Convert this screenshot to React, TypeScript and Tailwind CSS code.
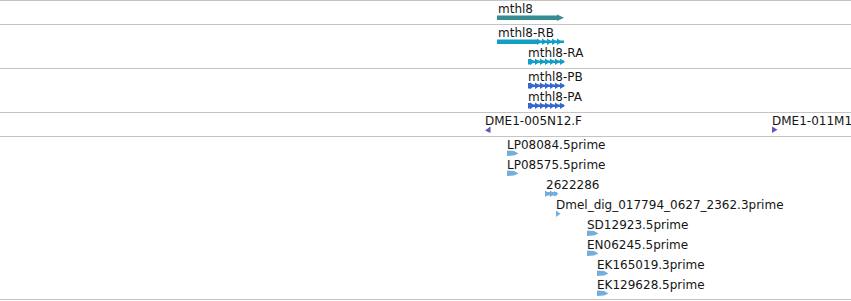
import React from 'react';

type GlyphKind = 'gene' | 'mixed' | 'chevrons' | 'left' | 'right' | 'wedge' | 'double' | 'tiny';

type Feature = {
  label: string;
  // full class names for the feature's place on the genome axis
  labelAt: string;
  glyphAt: string;
  kind: GlyphKind;
  color: string;
};

const tracks: { height: string; features: Feature[] }[] = [
  {
    height: 'h-[24px]',
    features: [{ label: 'mthl8', labelAt: 'ml-[498px]', glyphAt: 'ml-[497px]', kind: 'gene', color: '#368c90' }],
  },
  {
    height: 'h-[44px]',
    features: [
      { label: 'mthl8-RB', labelAt: 'ml-[498px]', glyphAt: 'ml-[497px]', kind: 'mixed', color: '#139fc4' },
      { label: 'mthl8-RA', labelAt: 'ml-[528px]', glyphAt: 'ml-[528px]', kind: 'chevrons', color: '#139fc4' },
    ],
  },
  {
    height: 'h-[44px]',
    features: [
      { label: 'mthl8-PB', labelAt: 'ml-[528px]', glyphAt: 'ml-[528px]', kind: 'chevrons', color: '#3568cf' },
      { label: 'mthl8-PA', labelAt: 'ml-[528px]', glyphAt: 'ml-[528px]', kind: 'chevrons', color: '#3568cf' },
    ],
  },
];

const estFeatures: Feature[] = [
  { label: 'LP08084.5prime', labelAt: 'ml-[507px]', glyphAt: 'ml-[507px]', kind: 'wedge', color: '#74aedb' },
  { label: 'LP08575.5prime', labelAt: 'ml-[507px]', glyphAt: 'ml-[507px]', kind: 'wedge', color: '#74aedb' },
  { label: '2622286', labelAt: 'ml-[546px]', glyphAt: 'ml-[545px]', kind: 'double', color: '#74aedb' },
  { label: 'Dmel_dig_017794_0627_2362.3prime', labelAt: 'ml-[556px]', glyphAt: 'ml-[556px]', kind: 'tiny', color: '#74aedb' },
  { label: 'SD12923.5prime', labelAt: 'ml-[587px]', glyphAt: 'ml-[587px]', kind: 'wedge', color: '#74aedb' },
  { label: 'EN06245.5prime', labelAt: 'ml-[587px]', glyphAt: 'ml-[587px]', kind: 'wedge', color: '#74aedb' },
  { label: 'EK165019.3prime', labelAt: 'ml-[597px]', glyphAt: 'ml-[597px]', kind: 'wedge', color: '#74aedb' },
  { label: 'EK129628.5prime', labelAt: 'ml-[597px]', glyphAt: 'ml-[597px]', kind: 'wedge', color: '#74aedb' },
];

function Chevrons({ from, to, color }: { from: number; to: number; color: string }) {
  const heads: number[] = [];
  for (let x = from; x + 4 <= to; x += 5) heads.push(x);
  return (
    <g fill={color}>
      <rect x={from} y={2.5} width={to - from} height={2.5} />
      {heads.map((x) => (
        <polygon key={x} points={`${x},0.5 ${x + 5},3.75 ${x},7`} />
      ))}
    </g>
  );
}

function Glyph({ kind, color }: { kind: GlyphKind; color: string }) {
  switch (kind) {
    case 'gene':
      return (
        <svg width={68} height={8} className="block">
          <polygon fill={color} points="0,1.5 60,1.5 60,0.5 67,3.75 60,7 60,6 0,6" />
        </svg>
      );
    case 'mixed':
      return (
        <svg width={68} height={8} className="block">
          <rect x={0} y={1.5} width={41} height={4.5} fill={color} />
          <Chevrons from={40} to={67} color={color} />
        </svg>
      );
    case 'chevrons':
      return (
        <svg width={37} height={8} className="block">
          <rect x={0} y={1} width={3} height={5.5} fill={color} />
          <Chevrons from={2} to={36} color={color} />
        </svg>
      );
    case 'left':
      return (
        <svg width={6} height={8} className="block">
          <polygon fill={color} points="5.5,0.5 0,4.5 5.5,7" />
        </svg>
      );
    case 'right':
      return (
        <svg width={6} height={8} className="block">
          <polygon fill={color} points="0,0.5 5.5,3.75 0,7" />
        </svg>
      );
    case 'wedge':
      return (
        <svg width={12} height={8} className="block">
          <polygon fill={color} points="0,0.5 7,1 11.5,3.5 7,5.5 0,6" />
        </svg>
      );
    case 'double':
      return (
        <svg width={14} height={8} className="block">
          <rect x={0} y={2} width={12} height={3.5} fill={color} />
          <polygon fill={color} points="0,0.5 5,3.75 0,7" />
          <polygon fill={color} points="5,0.5 10,3.75 5,7" />
          <polygon fill={color} points="9,1 13.5,3.75 9,6.5" />
        </svg>
      );
    case 'tiny':
      return (
        <svg width={6} height={8} className="block">
          <polygon fill={color} points="0,0.5 4.5,3.75 0,7" />
        </svg>
      );
  }
}

function FeatureRow({ f }: { f: Feature }) {
  return (
    <div className="flex h-[20px] flex-col">
      <div className={`${f.labelAt} h-[13px] pt-[2px] whitespace-nowrap text-[12px] leading-[12px] text-[#151515]`}>
        {f.label}
      </div>
      <div className={f.glyphAt}>
        <Glyph kind={f.kind} color={f.color} />
      </div>
    </div>
  );
}

export default function App() {
  return (
    <div
      className="flex h-[301px] w-[851px] flex-col overflow-hidden bg-white"
      style={{ fontFamily: '"DejaVu Sans", Verdana, sans-serif' }}
    >
      {tracks.map((t, i) => (
        <div key={i} className={`${t.height} flex shrink-0 flex-col border-t border-[#c4c4c4]`}>
          {t.features.map((f) => (
            <FeatureRow key={f.label} f={f} />
          ))}
        </div>
      ))}

      {/* clone ends track */}
      <div className="flex h-[24px] shrink-0 items-start border-t border-[#c4c4c4]">
        <div className="ml-[485px] flex w-[287px] shrink-0 flex-col">
          <div className="h-[13px] pt-[2px] whitespace-nowrap text-[12px] leading-[12px] text-[#151515]">
            DME1-005N12.F
          </div>
          <Glyph kind="left" color="#6e52b4" />
        </div>
        <div className="flex shrink-0 flex-col">
          <div className="h-[13px] pt-[2px] whitespace-nowrap text-[12px] leading-[12px] text-[#151515]">
            DME1-011M1
          </div>
          <Glyph kind="right" color="#6e52b4" />
        </div>
      </div>

      {/* EST track */}
      <div className="flex h-[164px] shrink-0 flex-col border-y border-[#c4c4c4]">
        {estFeatures.map((f) => (
          <FeatureRow key={f.label} f={f} />
        ))}
      </div>
    </div>
  );
}
